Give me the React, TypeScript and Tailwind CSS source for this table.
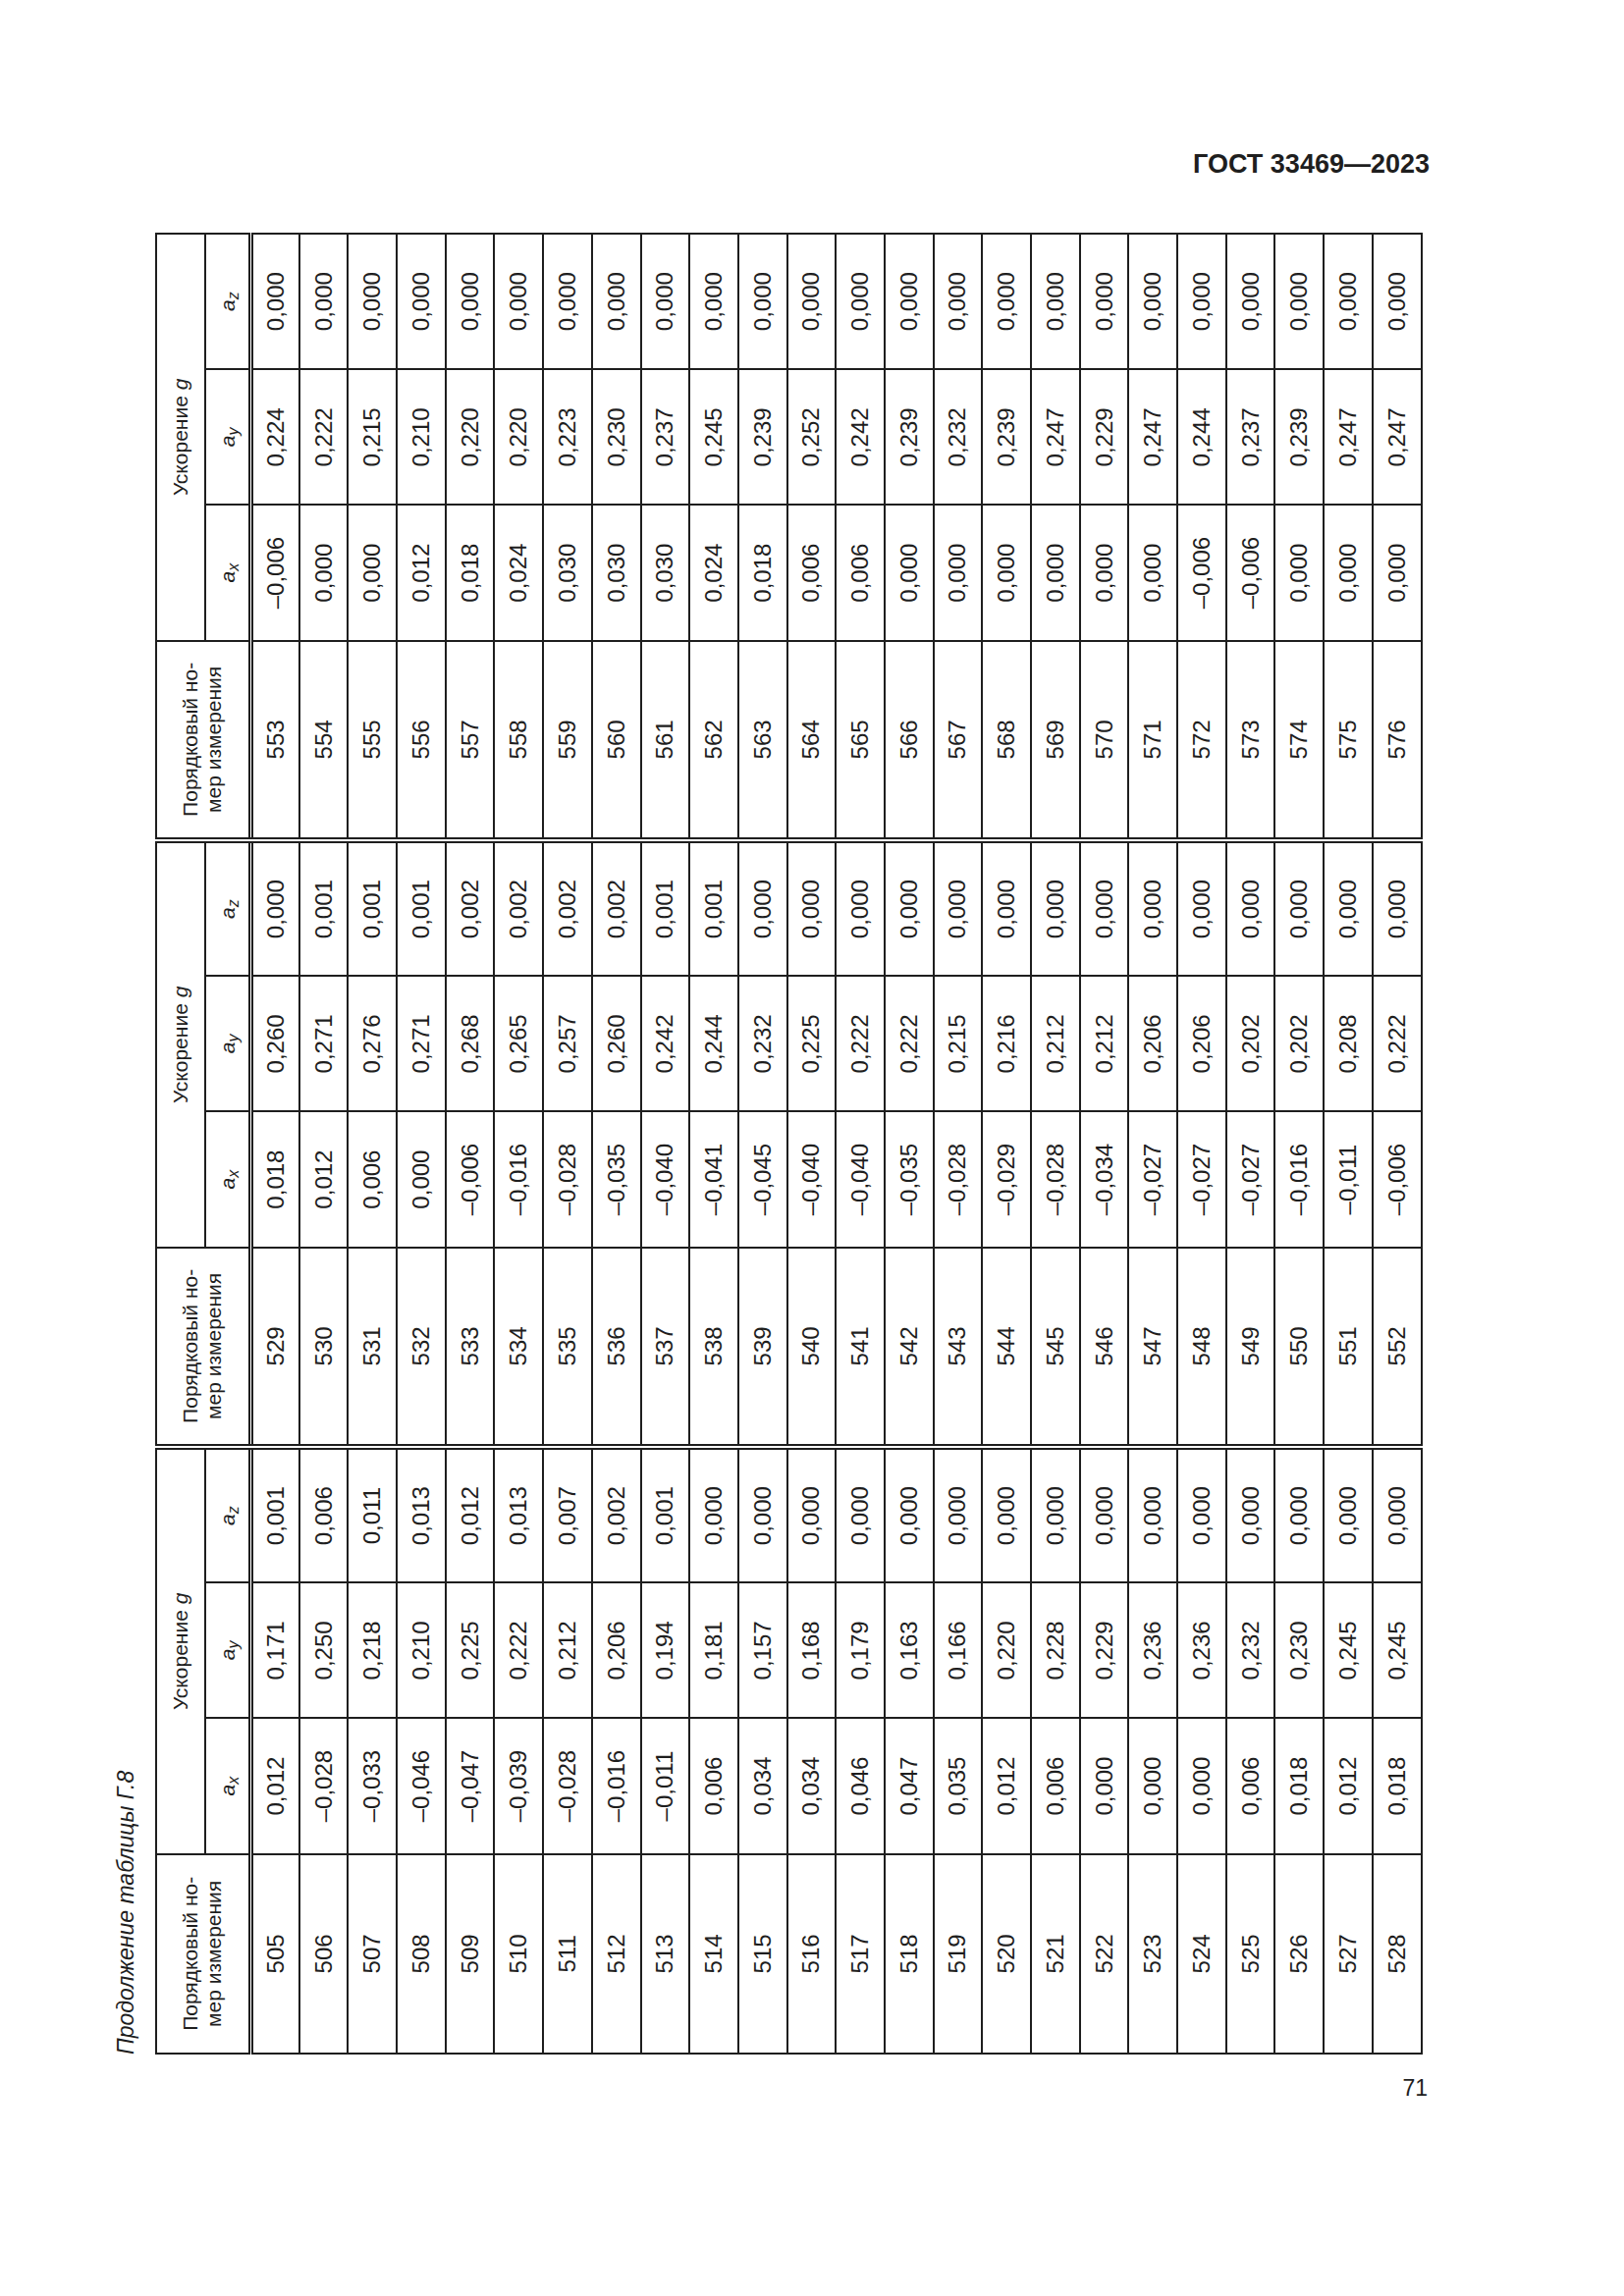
const groups: { start: number; rows: [string, string, string][] }[] = [
  {
    start: 505,
    rows: [
      ["0,012", "0,171", "0,001"],
      ["-0,028", "0,250", "0,006"],
      ["-0,033", "0,218", "0,011"],
      ["-0,046", "0,210", "0,013"],
      ["-0,047", "0,225", "0,012"],
      ["-0,039", "0,222", "0,013"],
      ["-0,028", "0,212", "0,007"],
      ["-0,016", "0,206", "0,002"],
      ["-0,011", "0,194", "0,001"],
      ["0,006", "0,181", "0,000"],
      ["0,034", "0,157", "0,000"],
      ["0,034", "0,168", "0,000"],
      ["0,046", "0,179", "0,000"],
      ["0,047", "0,163", "0,000"],
      ["0,035", "0,166", "0,000"],
      ["0,012", "0,220", "0,000"],
      ["0,006", "0,228", "0,000"],
      ["0,000", "0,229", "0,000"],
      ["0,000", "0,236", "0,000"],
      ["0,000", "0,236", "0,000"],
      ["0,006", "0,232", "0,000"],
      ["0,018", "0,230", "0,000"],
      ["0,012", "0,245", "0,000"],
      ["0,018", "0,245", "0,000"],
    ],
  },
  {
    start: 529,
    rows: [
      ["0,018", "0,260", "0,000"],
      ["0,012", "0,271", "0,001"],
      ["0,006", "0,276", "0,001"],
      ["0,000", "0,271", "0,001"],
      ["-0,006", "0,268", "0,002"],
      ["-0,016", "0,265", "0,002"],
      ["-0,028", "0,257", "0,002"],
      ["-0,035", "0,260", "0,002"],
      ["-0,040", "0,242", "0,001"],
      ["-0,041", "0,244", "0,001"],
      ["-0,045", "0,232", "0,000"],
      ["-0,040", "0,225", "0,000"],
      ["-0,040", "0,222", "0,000"],
      ["-0,035", "0,222", "0,000"],
      ["-0,028", "0,215", "0,000"],
      ["-0,029", "0,216", "0,000"],
      ["-0,028", "0,212", "0,000"],
      ["-0,034", "0,212", "0,000"],
      ["-0,027", "0,206", "0,000"],
      ["-0,027", "0,206", "0,000"],
      ["-0,027", "0,202", "0,000"],
      ["-0,016", "0,202", "0,000"],
      ["-0,011", "0,208", "0,000"],
      ["-0,006", "0,222", "0,000"],
    ],
  },
  {
    start: 553,
    rows: [
      ["-0,006", "0,224", "0,000"],
      ["0,000", "0,222", "0,000"],
      ["0,000", "0,215", "0,000"],
      ["0,012", "0,210", "0,000"],
      ["0,018", "0,220", "0,000"],
      ["0,024", "0,220", "0,000"],
      ["0,030", "0,223", "0,000"],
      ["0,030", "0,230", "0,000"],
      ["0,030", "0,237", "0,000"],
      ["0,024", "0,245", "0,000"],
      ["0,018", "0,239", "0,000"],
      ["0,006", "0,252", "0,000"],
      ["0,006", "0,242", "0,000"],
      ["0,000", "0,239", "0,000"],
      ["0,000", "0,232", "0,000"],
      ["0,000", "0,239", "0,000"],
      ["0,000", "0,247", "0,000"],
      ["0,000", "0,229", "0,000"],
      ["0,000", "0,247", "0,000"],
      ["-0,006", "0,244", "0,000"],
      ["-0,006", "0,237", "0,000"],
      ["0,000", "0,239", "0,000"],
      ["0,000", "0,247", "0,000"],
      ["0,000", "0,247", "0,000"],
    ],
  },
];

const fmt = (v: string) => v.replace("-", "–");

const cell = "border-2 border-[#1e1e1e] p-0 text-center align-middle";
const groupStart = "border-l-[6px] [border-left-style:double]";
const headBottom = "border-b-[5px] [border-bottom-style:double]";

function Axis({ k }: { k: string }) {
  return (
    <span className="italic">
      a<sub className="text-[16px]">{k}</sub>
    </span>
  );
}

export default function App() {
  return (
    <div className="h-[2339px] w-[1654px] overflow-hidden bg-white font-['Liberation_Sans',Arial,sans-serif] text-[#1e1e1e]">
      <div className="pr-[198px] pt-[153px] text-right text-[27px] font-bold leading-[28px]">ГОСТ 33469—2023</div>

      <div className="ml-[116px] mt-[56px] h-[1856px] w-[1336px]">
        <div className="w-[1856px] origin-top-left [transform:translateY(1856px)_rotate(-90deg)]">
          <div className="mb-[18px] h-[24px] text-[23px] italic leading-[24px]">Продолжение таблицы Г.8</div>
          <table className="w-[1856px] table-fixed border-collapse border-2 border-[#1e1e1e]">
            <colgroup>
              {groups.map((g) => [
                <col key={g.start + "p"} className="w-[203px]" />,
                <col key={g.start + "x"} className="w-[138px]" />,
                <col key={g.start + "y"} className="w-[138px]" />,
                <col key={g.start + "z"} className="w-[138px]" />,
              ])}
            </colgroup>
            <thead>
              <tr className="h-[50px] text-[21px]">
                {groups.map((g, i) => [
                  <th
                    key={g.start + "h"}
                    rowSpan={2}
                    className={`${cell} ${headBottom} ${i > 0 ? groupStart : ""} font-normal leading-[24px]`}
                  >
                    Порядковый но-
                    <br />
                    мер измерения
                  </th>,
                  <th key={g.start + "u"} colSpan={3} className={`${cell} font-normal`}>
                    Ускорение <span className="italic">g</span>
                  </th>,
                ])}
              </tr>
              <tr className="h-[46px] text-[21px]">
                {groups.map((g) =>
                  ["x", "y", "z"].map((k) => (
                    <th key={g.start + k} className={`${cell} ${headBottom} font-normal`}>
                      <Axis k={k} />
                    </th>
                  ))
                )}
              </tr>
            </thead>
            <tbody className="text-[24px]">
              {groups[0].rows.map((_, r) => (
                <tr key={r} className="h-[49.7px]">
                  {groups.map((g, i) => [
                    <td key={g.start + "n"} className={`${cell} ${i > 0 ? groupStart : ""}`}>
                      {g.start + r}
                    </td>,
                    ...g.rows[r].map((v, j) => (
                      <td key={g.start + "v" + j} className={cell}>
                        {fmt(v)}
                      </td>
                    )),
                  ])}
                </tr>
              ))}
            </tbody>
          </table>
        </div>
      </div>

      <div className="mt-[23px] pr-[200px] text-right text-[23px] leading-none">71</div>
    </div>
  );
}
